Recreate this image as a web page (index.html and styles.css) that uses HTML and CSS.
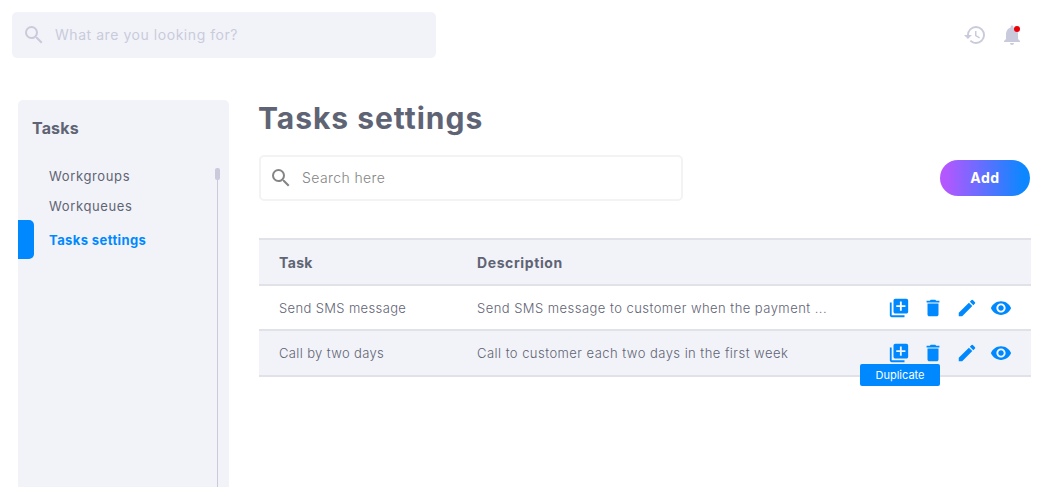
FILE: index.html
```
<!DOCTYPE html>
<html lang="en">
<head>
<meta charset="utf-8">
<title>Tasks settings</title>
<link rel="stylesheet" href="styles.css">
</head>
<body>
<svg class="sprite" aria-hidden="true">
  <symbol id="search" viewBox="0 0 24 24"><path d="M15.5 14h-.79l-.28-.27A6.471 6.471 0 0 0 16 9.5 6.5 6.5 0 1 0 9.5 16c1.61 0 3.09-.59 4.23-1.57l.27.28v.79l5 4.99L20.49 19l-4.99-5zm-6 0C7.01 14 5 11.99 5 9.5S7.01 5 9.5 5 14 7.01 14 9.5 11.99 14 9.5 14z"/></symbol>
  <symbol id="history" viewBox="0 0 24 24"><path d="M13 3a9 9 0 0 0-9 9H1l3.89 3.89.07.14L9 12H6c0-3.87 3.13-7 7-7s7 3.13 7 7-3.13 7-7 7c-1.93 0-3.68-.79-4.94-2.06l-1.42 1.42A8.954 8.954 0 0 0 13 21a9 9 0 0 0 0-18zm-1 5v5l4.28 2.54.72-1.21-3.5-2.08V8H12z"/></symbol>
  <symbol id="bell" viewBox="0 0 24 24"><path d="M12 22c1.1 0 2-.9 2-2h-4c0 1.1.89 2 2 2zm6-6v-5c0-3.07-1.64-5.64-4.5-6.32V4c0-.83-.67-1.5-1.5-1.5s-1.5.67-1.5 1.5v.68C7.63 5.36 6 7.92 6 11v5l-2 2v1h16v-1l-2-2z"/></symbol>
  <symbol id="duplicate" viewBox="0 0 24 24"><path d="M4 6H2v14c0 1.1.9 2 2 2h14v-2H4V6zm16-4H8c-1.1 0-2 .9-2 2v12c0 1.1.9 2 2 2h12c1.1 0 2-.9 2-2V4c0-1.1-.9-2-2-2zm-1 9h-4v4h-2v-4H9V9h4V5h2v4h4v2z"/></symbol>
  <symbol id="delete" viewBox="0 0 24 24"><path d="M6 19c0 1.1.9 2 2 2h8c1.1 0 2-.9 2-2V7H6v12zM19 4h-3.5l-1-1h-5l-1 1H5v2h14V4z"/></symbol>
  <symbol id="edit" viewBox="0 0 24 24"><path d="M3 17.25V21h3.75L17.81 9.94l-3.75-3.75L3 17.25zM20.71 7.04a.996.996 0 0 0 0-1.41l-2.34-2.34a.996.996 0 0 0-1.41 0l-1.83 1.83 3.75 3.75 1.83-1.83z"/></symbol>
  <symbol id="view" viewBox="0 0 24 24"><path d="M12 4.5C7 4.5 2.73 7.61 1 12c1.73 4.39 6 7.5 11 7.5s9.27-3.11 11-7.5c-1.73-4.39-6-7.5-11-7.5zM12 17c-2.76 0-5-2.24-5-5s2.24-5 5-5 5 2.24 5 5-2.24 5-5 5zm0-8c-1.66 0-3 1.34-3 3s1.34 3 3 3 3-1.34 3-3-1.34-3-3-3z"/></symbol>
</svg>

<header class="topbar">
  <div class="search search-global"><svg class="icon"><use href="#search"/></svg><span class="hint">What are you looking for?</span></div>
  <div class="top-actions">
    <svg class="icon"><use href="#history"/></svg>
    <div class="bell"><svg class="icon"><use href="#bell"/></svg><i class="dot"></i></div>
  </div>
</header>

<div class="layout">
  <aside class="sidebar">
    <h2 class="side-title">Tasks</h2>
    <div class="side-body">
      <nav class="menu">
        <a class="item groups"><span>Workgroups</span></a>
        <a class="item queues"><span>Workqueues</span></a>
        <a class="item active"><span>Tasks settings</span></a>
      </nav>
      <div class="scroll"><div class="thumb"></div><div class="track"></div></div>
    </div>
  </aside>

  <main class="main">
    <h1 class="title">Tasks settings</h1>
    <div class="toolbar">
      <div class="search search-tasks"><svg class="icon"><use href="#search"/></svg><span class="hint">Search here</span></div>
      <button class="add">Add</button>
    </div>
    <div class="table">
      <div class="row head"><span class="c-task">Task</span><span class="c-desc">Description</span></div>
      <div class="row">
        <span class="c-task">Send SMS message</span><span class="c-desc">Send SMS message to customer when the payment ...</span>
        <span class="actions"><svg><use href="#duplicate"/></svg><svg><use href="#delete"/></svg><svg><use href="#edit"/></svg><svg><use href="#view"/></svg></span>
      </div>
      <div class="row alt">
        <span class="c-task">Call by two days</span><span class="c-desc">Call to customer each two days in the first week</span>
        <span class="actions"><svg><use href="#duplicate"/></svg><svg><use href="#delete"/></svg><svg><use href="#edit"/></svg><svg><use href="#view"/></svg><span class="tooltip">Duplicate</span></span>
      </div>
    </div>
  </main>
</div>
</body>
</html>
```
FILE: styles.css
```
* { box-sizing: border-box; }
html, body { height: 100%; }
body { margin: 0; overflow: hidden; display: flex; flex-direction: column; background: #fff; color: #5f6475; font-family: Inter, "Open Sans", sans-serif; font-size: 13px; white-space: nowrap; }
svg { display: block; fill: currentColor; flex: none; }
h1, h2 { margin: 0; }
.sprite { display: none; }
.icon { width: 24px; height: 24px; }

.topbar { display: flex; justify-content: space-between; padding: 12px 35px 0 12px; height: 100px; flex: none; }
.search { display: flex; align-items: center; width: 424px; height: 46px; border-radius: 5px; }
.hint { padding-bottom: 2px; }
.search-global { padding-left: 10px; gap: 9px; background: #f2f3f8; color: #c9cbdc; font-size: 14px; font-weight: 400; letter-spacing: .55px; }
.top-actions { display: flex; align-items: flex-start; gap: 13px; padding-top: 11px; color: #c9cbdc; }
.bell { position: relative; }
.dot { position: absolute; left: 14px; top: 3px; width: 6px; height: 6px; border-radius: 50%; background: #ec0008; }

.layout { display: flex; flex: 1; min-height: 0; padding: 0 28px 0 18px; gap: 30px; }
.sidebar { width: 211px; flex: none; display: flex; flex-direction: column; background: #f2f3f8; border-radius: 5px 5px 0 0; }
.side-title { height: 68px; padding: 18px 0 0 14px; font-size: 16px; line-height: 20px; font-weight: 650; letter-spacing: .15px; }
.side-body { flex: 1; display: flex; justify-content: space-between; padding-right: 9px; }
.menu { display: flex; flex-direction: column; }
.item { display: flex; align-items: center; padding-left: 31px; font-weight: 400; letter-spacing: .63px; }
.groups { height: 16px; }
.queues { height: 16px; margin: 14px 0; padding-bottom: 1px; }
.active { height: 39px; margin-top: -8px; padding-left: 0; gap: 15px; color: #0089ff; font-weight: 700; letter-spacing: .4px; }
.active::before { content: ""; width: 16px; height: 39px; background: #0089ff; border-radius: 0 5px 5px 0; }
.scroll { display: flex; flex-direction: column; align-items: center; width: 5px; }
.thumb { width: 5px; height: 12px; border-radius: 2px; background: #c9cbdd; }
.track { width: 1px; flex: 1; background: #c9cbdd; }

.main { flex: 1; }
.title { height: 55px; margin-left: -1px; font-size: 30px; line-height: 36px; font-weight: 700; letter-spacing: .98px; }
.toolbar { display: flex; align-items: center; justify-content: space-between; padding-right: 1px; }
.search-tasks { border: 2px solid #f3f3f3; padding-left: 8px; gap: 9px; color: #858585; font-size: 14px; font-weight: 350; letter-spacing: .4px; }
.add { width: 90px; height: 36px; padding: 0 0 2px; border: 0; border-radius: 18px; background: linear-gradient(90deg, #b557ff 5%, #0d87ff 92%); color: #fff; font: 700 14px Inter, sans-serif; letter-spacing: .6px; }
.table { margin-top: 37px; width: 772px; border-top: 2px solid #e0e1e9; }
.row { display: flex; align-items: center; height: 45px; padding: 0 19px 0 20px; border-bottom: 2px solid #e0e1e9; font-weight: 350; letter-spacing: .46px; }
.head { height: 46px; background: #f2f3f8; font-size: 14px; font-weight: 650; letter-spacing: .6px; }
.alt { height: 46px; padding-bottom: 1px; background: #f2f3f8; }
.c-task { width: 198px; flex: none; letter-spacing: .36px; }
.c-desc { flex: 1; }
.actions { position: relative; display: flex; gap: 12px; color: #0089ff; }
.actions svg { width: 22px; height: 22px; }
.tooltip { position: absolute; left: -28px; top: 22px; width: 80px; height: 22px; border-radius: 2px; background: #0089ff; color: #fff; font-size: 11px; font-weight: 400; line-height: 22px; letter-spacing: 0; text-align: center; }
```
